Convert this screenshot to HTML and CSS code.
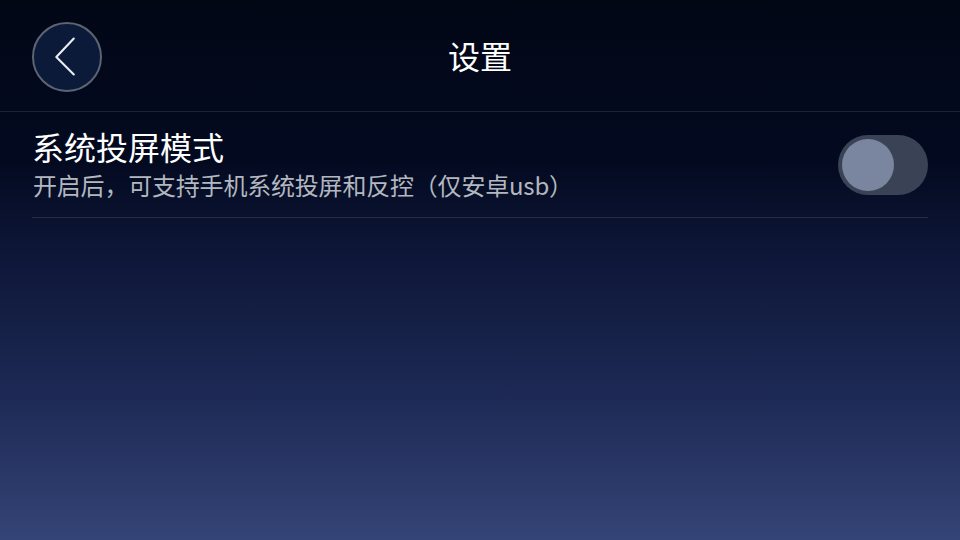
FILE: index.html
```html
<!DOCTYPE html>
<html lang="zh-CN">
<head>
<meta charset="utf-8">
<title>设置</title>
<link rel="stylesheet" href="styles.css">
</head>
<body>
<div class="page">
  <header class="header">
    <button class="back" aria-label="返回">
      <svg width="68" height="68" viewBox="0 0 68 68">
        <polyline points="41,5 23,24 41,42" transform="translate(0,10)" fill="none" stroke="#e8ebf0" stroke-width="2.2" stroke-linecap="round" stroke-linejoin="round"/>
      </svg>
    </button>
    <h1 class="title">设置</h1>
    <div class="spacer"></div>
  </header>
  <section class="list">
    <div class="row">
      <div class="texts">
        <div class="row-title">系统投屏模式</div>
        <div class="row-sub">开启后，可支持手机系统投屏和反控（仅安卓usb）</div>
      </div>
      <div class="toggle"><div class="knob"></div></div>
    </div>
  </section>
</div>
</body>
</html>
```
FILE: styles.css
```css
html, body {
  margin: 0;
  padding: 0;
  width: 960px;
  height: 540px;
  overflow: hidden;
}
body {
  font-family: "Noto Sans CJK SC", "Noto Sans", Roboto, sans-serif;
  background: linear-gradient(to bottom, #020716 0%, #030a20 30%, #0c1535 45%, #1e2a56 74%, #344476 100%);
  color: #ffffff;
}
.page {
  width: 960px;
  height: 540px;
  display: flex;
  flex-direction: column;
}
.header {
  border-bottom: 1px solid #1c2334;
  display: flex;
  align-items: center;
  padding: 0 32px;
  box-sizing: border-box;
  height: 112px;
}
.back {
  width: 70px;
  height: 70px;
  border-radius: 50%;
  border: 2px solid #5c6474;
  background: #0b1a38;
  padding: 0;
  margin-top: 3px;
  display: flex;
  align-items: center;
  justify-content: center;
  box-sizing: border-box;
}
.back svg {
  display: block;
}
.title {
  flex: 1;
  text-align: center;
  margin: 0;
  font-size: 32px;
  font-weight: 400;
  line-height: 1;
  margin-top: -2px;
}
.spacer {
  width: 70px;
}
.list {
  padding: 0 32px;
}
.row {
  height: 106px;
  border-bottom: 1px solid #272e40;
  display: flex;
  align-items: center;
  justify-content: space-between;
  box-sizing: border-box;
}
.texts {
  display: flex;
  flex-direction: column;
  margin-top: -2px;
}
.row-title {
  font-size: 32px;
  line-height: 36px;
  color: #ffffff;
}
.row-sub {
  font-size: 24px;
  line-height: 30px;
  margin-top: 6px;
  color: #b3b7bf;
  margin-left: 1px;
  letter-spacing: -0.2px;
}
.toggle {
  width: 90px;
  height: 60px;
  border-radius: 30px;
  background: #3a4356;
  display: flex;
  align-items: center;
  padding: 0 4px;
  box-sizing: border-box;
  margin-top: 0;
}
.knob {
  width: 52px;
  height: 52px;
  border-radius: 50%;
  background: #7a869f;
}
```
